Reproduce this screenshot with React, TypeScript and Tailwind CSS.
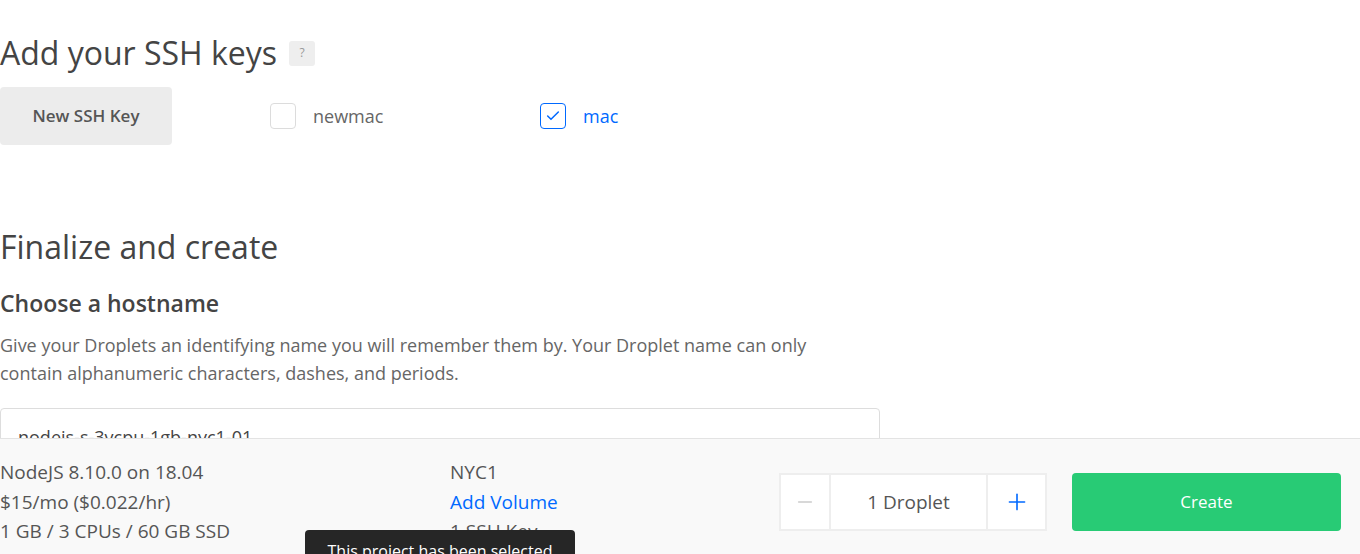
import { Check, Minus, Plus } from "lucide-react";

const font = { fontFamily: "'Open Sans', Lato, sans-serif" };

const SshKey = ({ name, checked }: { name: string; checked: boolean }) => (
  <label className="flex items-center gap-[17px] cursor-pointer">
    <span
      className={`w-[26px] h-[26px] rounded-[4px] border flex items-center justify-center bg-white ${
        checked ? "border-[#0069ff]" : "border-[#dcdcdc]"
      }`}
    >
      {checked && <Check size={16} strokeWidth={2.25} className="text-[#0069ff]" />}
    </span>
    <span className={`text-[18px] ${checked ? "text-[#0069ff]" : "text-[#666]"}`}>{name}</span>
  </label>
);

const App = () => {
  return (
    <div className="relative h-[554px] overflow-hidden bg-white text-[#444]" style={font}>
      <section className="pt-[32px]">
        <div className="flex items-center gap-[12px]">
          <h2 className="text-[32px] leading-[42px] text-[#444]">Add your SSH keys</h2>
          <span className="w-[26px] h-[25px] rounded-[3px] bg-[#eee] text-[#999] text-[12px] flex items-center justify-center">
            ?
          </span>
        </div>
        <div className="mt-[13px] flex items-center">
          <button className="w-[172px] h-[58px] rounded-[4px] bg-[#ececec] text-[#555] font-semibold text-[17px]">
            New SSH Key
          </button>
          <div className="ml-[98px] w-[270px]">
            <SshKey name="newmac" checked={false} />
          </div>
          <SshKey name="mac" checked />
        </div>
      </section>

      <section className="mt-[81px]">
        <h2 className="text-[32px] leading-[42px] text-[#444]">Finalize and create</h2>
        <h3 className="mt-[20px] text-[23px] leading-[30px] font-semibold text-[#444]">Choose a hostname</h3>
        <p className="mt-[13px] w-[840px] text-[18px] leading-[28px] text-[#666]">
          Give your Droplets an identifying name you will remember them by. Your Droplet name can only contain
          alphanumeric characters, dashes, and periods.
        </p>
        <div className="mt-[21px] w-[880px] h-[58px] rounded-[4px] border border-[#ddd] px-[17px] flex items-center text-[18px] text-[#444]">
          nodejs-s-3vcpu-1gb-nyc1-01
        </div>
      </section>

      <footer className="absolute left-0 right-0 bottom-0 h-[116px] bg-[#f9f9f9] border-t border-[#e3e3e3] flex items-start pt-[19px]">
        <div className="w-[450px] text-[19px] leading-[29.5px] text-[#555]">
          <div>NodeJS 8.10.0 on 18.04</div>
          <div>$15/mo ($0.022/hr)</div>
          <div>1 GB / 3 CPUs / 60 GB SSD</div>
        </div>
        <div className="w-[329px] text-[19px] leading-[29.5px] text-[#555]">
          <div>NYC1</div>
          <div className="text-[#0069ff]">Add Volume</div>
          <div>1 SSH Key</div>
        </div>
        <div className="mt-[15px] flex gap-[2px] p-[2px] bg-[#eee] h-[58px]">
          <button className="w-[48px] bg-white flex items-center justify-center text-[#ccc]">
            <Minus size={22} strokeWidth={1.5} />
          </button>
          <div className="w-[155px] bg-white flex items-center justify-center text-[19px] text-[#555]">1 Droplet</div>
          <button className="w-[57px] bg-white flex items-center justify-center text-[#0069ff]">
            <Plus size={26} strokeWidth={1.5} />
          </button>
        </div>
        <button className="mt-[15px] ml-[25px] w-[269px] h-[58px] rounded-[4px] bg-[#28cb75] text-white text-[17px]">
          Create
        </button>
      </footer>

      <div className="absolute left-[305px] top-[530px] w-[270px] h-[50px] rounded-[4px] bg-[#262626] text-white text-[16px] text-center pt-[9px]">
        This project has been selected
      </div>
    </div>
  );
};

export default App;
